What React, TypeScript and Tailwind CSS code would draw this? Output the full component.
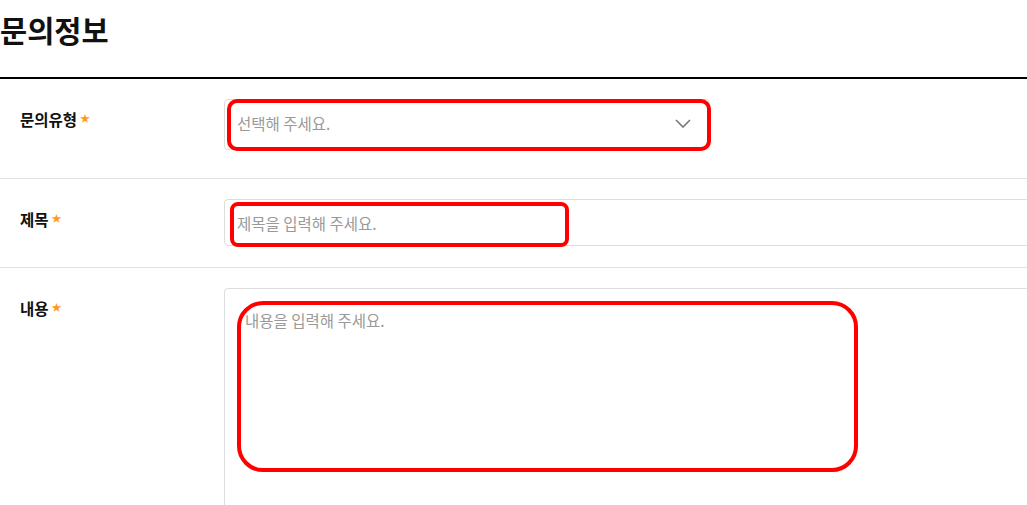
function Label({ text }: { text: string }) {
  return (
    <div className="w-[224px] shrink-0 pl-5 pt-[9px] flex items-start">
      <span className="text-[15.5px] leading-[22px] font-bold text-[#111]">{text}</span>
      <span className="ml-[3px] mt-[5px] text-[10px] leading-[10px] text-[#ff9a1f]">★</span>
    </div>
  );
}

export default function App() {
  return (
    <div
      className="relative w-[1027px] h-[505px] overflow-hidden bg-white"
      style={{ fontFamily: '"Noto Sans CJK KR", "Noto Sans", sans-serif' }}
    >
      <h1 className="h-[77px] pt-[7px] text-[29.5px] leading-[44px] font-bold text-[#111]">
        문의정보
      </h1>
      <div className="border-t-2 border-black" />

      <div className="flex pt-5 pb-[28px] border-b border-[#e0e0e0]">
        <Label text="문의유형" />
        <div className="w-[486px] h-[51px] flex items-center justify-between rounded border border-[#ddd] pl-3 pr-[18px]">
          <span className="text-[15.5px] leading-6 text-[#999] -mt-[3px]">선택해 주세요.</span>
          <svg width="16" height="9" viewBox="0 0 16 9" fill="none" className="-mt-[2px]">
            <path d="M1 1l7 7 7-7" stroke="#777" strokeWidth="1.6" />
          </svg>
        </div>
      </div>

      <div className="flex pt-5 pb-[21px] border-b border-[#e0e0e0]">
        <Label text="제목" />
        <div className="w-[900px] shrink-0 h-[47px] flex items-center rounded border border-[#ddd] pl-3">
          <span className="text-[15.5px] leading-6 text-[#999]">제목을 입력해 주세요.</span>
        </div>
      </div>

      <div className="flex pt-5">
        <Label text="내용" />
        <div className="w-[900px] shrink-0 h-[300px] rounded border border-[#ddd] pl-5 pt-[19px]">
          <span className="text-[15.5px] leading-6 text-[#999]">내용을 입력해 주세요.</span>
        </div>
      </div>

      <div className="absolute left-[227px] top-[99px] w-[484px] h-[52px] rounded-[10px] border-[4px] border-[#ff0000]" />
      <div className="absolute left-[230px] top-[202px] w-[339px] h-[45px] rounded-[8px] border-[4px] border-[#ff0000]" />
      <div className="absolute left-[237px] top-[301px] w-[621px] h-[171px] rounded-[26px] border-[4px] border-[#ff0000]" />
    </div>
  );
}
